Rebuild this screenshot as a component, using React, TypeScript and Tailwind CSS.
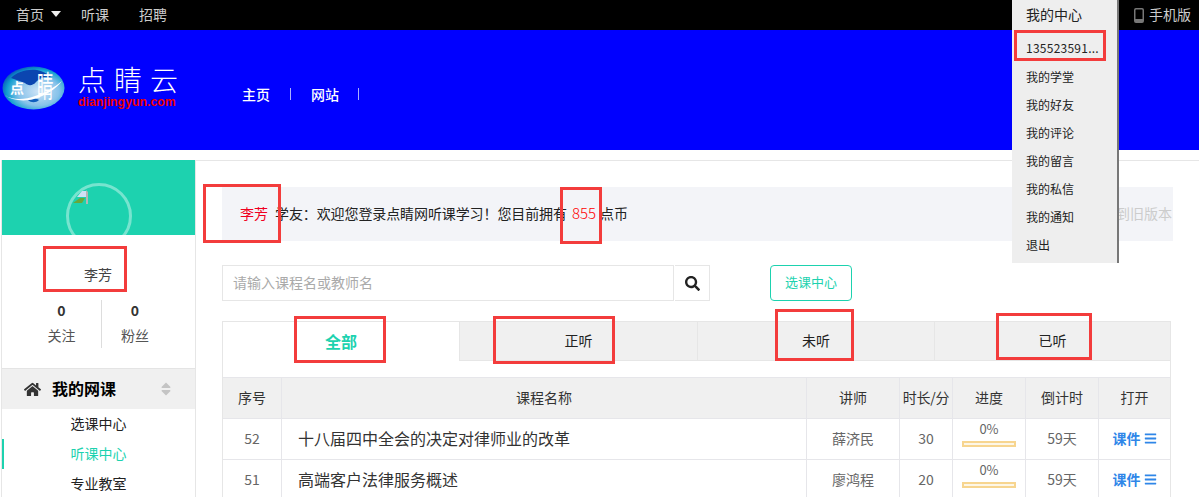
import { FaBars, FaHome, FaSearch, FaSort } from "react-icons/fa";

const FONT = "font-['Noto_Sans_CJK_SC','Liberation_Sans',sans-serif]";

const DROPDOWN = ["我的学堂", "我的好友", "我的评论", "我的留言", "我的私信", "我的通知", "退出"];

const COLUMNS = "grid grid-cols-[58px_525px_93px_53px_73px_73px_1fr]";

const COURSES = [
  { id: 52, title: "十八届四中全会的决定对律师业的改革", teacher: "薛济民", minutes: 30 },
  { id: 51, title: "高端客户法律服务概述", teacher: "廖鸿程", minutes: 20 },
];

// Red annotation boxes sit on top of the screenshot, so they are placed by coordinates.
const MARKS = [
  "left-[203px] top-[184px] w-[78px] h-[59px]",
  "left-[560px] top-[187px] w-[42px] h-[57px]",
  "left-[43px] top-[246px] w-[84px] h-[46px]",
  "left-[294px] top-[316px] w-[92px] h-[47px]",
  "left-[493px] top-[316px] w-[122px] h-[48px]",
  "left-[775px] top-[309px] w-[79px] h-[52px]",
  "left-[996px] top-[313px] w-[96px] h-[47px]",
  "left-[1014px] top-[30px] w-[92px] h-[31px]",
];

function Logo() {
  return (
    <div className="mb-[4px] flex items-center gap-[13px]">
      <svg width="63" height="44" viewBox="0 0 63 44" className="shrink-0 overflow-visible">
        <defs>
          <radialGradient id="globe" cx="58%" cy="58%" r="60%">
            <stop offset="0%" stopColor="#cfe4f7" />
            <stop offset="55%" stopColor="#86c2ea" />
            <stop offset="85%" stopColor="#119fd0" />
            <stop offset="100%" stopColor="#0a62bb" />
          </radialGradient>
        </defs>
        <ellipse cx="31.5" cy="22" rx="31" ry="21.5" fill="url(#globe)" />
        <path d="M9 12c6-6 15-9 26-8 5 1 10 3 14 7-7-1-11 1-15 5-3 4-8 4-11 1-5-2-9-3-14-5z" fill="#0b45b0" />
        <path d="M26 34c4-2 8-2 11 0-3 3-8 3-11 0z" fill="#0f5fbe" />
        <path d="M3 29c6 5 20 5 30 1 10-3 20-9 27-15-6 8-17 15-28 18-11 3-23 1-29-4z" fill="#fff" />
        <text x="8" y="27" fontSize="14" fontWeight="700" fill="#fff">点</text>
        <text transform="translate(35 31) scale(0.75 1.35)" fontSize="22" fontWeight="400" fill="#fff">睛</text>
      </svg>
      <div className="flex flex-col items-start">
        <span className="mb-[5px] text-[28px] leading-[24px] tracking-[8px] font-light text-white">点睛云</span>
        <span className="text-[12.3px] leading-[13px] font-bold text-[#f00000] font-['Liberation_Sans',sans-serif]">dianjingyun.com</span>
      </div>
    </div>
  );
}

function TopBar() {
  return (
    <div className="h-[30px] bg-black flex items-center justify-between pl-4 pr-2 pb-[2px] text-sm text-[#ccc]">
      <div className="flex items-center">
        <span>首页</span>
        <svg width="10" height="6" viewBox="0 0 10 6" className="ml-[7px] mr-5">
          <path d="M0 0h10L5 6z" fill="#eee" />
        </svg>
        <span className="mr-[30px]">听课</span>
        <span>招聘</span>
      </div>
      <div className="flex items-center gap-[5px]">
        <svg width="10" height="15" viewBox="0 0 10 15" className="mt-[2px]">
          <rect x="0.75" y="0.75" width="8.5" height="13.5" rx="1.2" fill="none" stroke="#777" strokeWidth="1.5" />
          <rect x="1" y="11" width="8" height="3" fill="#777" />
        </svg>
        <span>手机版</span>
      </div>
    </div>
  );
}

function Banner() {
  return (
    <div className="h-[120px] bg-[#0000ff] pl-[2px] flex items-center">
      <Logo />
      <div className="ml-[56px] mt-[8px] flex items-center text-sm font-medium text-white">
        <span>主页</span>
        <span className="mx-5 h-3 w-px bg-[#aab0ff]" />
        <span>网站</span>
        <span className="mx-[19px] h-3 w-px bg-[#aab0ff]" />
      </div>
    </div>
  );
}

function Sidebar() {
  return (
    <aside className="ml-px w-[195px] shrink-0 border-x border-[#e6e6e6]">
      <div className="relative h-[75px] bg-[#1dd2af]">
        <div className="absolute left-[64px] top-[23px] w-[66px] h-[66px] rounded-full border-[3px] border-white/40" />
        <svg width="16" height="16" viewBox="0 0 16 16" className="absolute left-[70px] top-[30px]">
          <path d="M14 0l2 2v12h-2z" fill="#b5b5b5" />
          <path d="M5 7l5-6h4v6z" fill="#cfe0f5" />
          <path d="M1 13l7-5h5l-3 5z" fill="#69a83a" />
        </svg>
      </div>
      <div className="pt-[29px] pr-px text-center text-sm leading-[20px] text-[#444]">李芳</div>
      <div className="mt-[16px] flex h-[48px] text-center">
        <div className="w-[100px] pl-[20px] border-r border-[#ddd]">
          <div className="text-sm leading-[20px] font-bold text-[#333]">0</div>
          <div className="mt-[5px] text-sm leading-[20px] text-[#555]">关注</div>
        </div>
        <div className="w-[66px]">
          <div className="text-sm leading-[20px] font-bold text-[#333]">0</div>
          <div className="mt-[5px] text-sm leading-[20px] text-[#555]">粉丝</div>
        </div>
      </div>
      <div className="mt-5 h-[41px] bg-[#f0f0f0] border-t border-[#e4e4e4] flex items-center pl-[22px] pr-[21px]">
        <FaHome size={17} className="text-[#333]" />
        <span className="ml-[11px] pb-[2px] text-base font-bold text-black">我的网课</span>
        <FaSort size={16} className="ml-auto text-[#c4c4c4]" />
      </div>
      <div className="text-sm text-center text-[#222]">
        <div className="h-[30px] leading-[28px]">选课中心</div>
        <div className="relative h-[30px] leading-[28px] text-[#1dd2af]">
          <span className="absolute left-0 top-0 h-[30px] w-[2px] bg-[#1dd2af]" />
          听课中心
        </div>
        <div className="h-[30px] leading-[28px]">专业教室</div>
      </div>
    </aside>
  );
}

function Tabs() {
  const tab = "flex items-center justify-center pb-[2px]";
  return (
    <div className="mr-[2px] mt-5 h-[40px] flex text-sm text-[#222] border border-[#e6e6e6] border-b-0">
      <div className={`${tab} w-[236px] text-base font-bold text-[#1dd2af]`}>全部</div>
      <div className={`${tab} w-[238px] bg-[#f0f0f0] border-l border-b border-[#e6e6e6]`}>正听</div>
      <div className={`${tab} w-[237px] bg-[#f0f0f0] border-l border-b border-[#e6e6e6]`}>未听</div>
      <div className={`${tab} flex-1 bg-[#f0f0f0] border-l border-b border-[#e6e6e6]`}>已听</div>
    </div>
  );
}

function CourseTable() {
  const cell = "flex items-center justify-center pb-[2px] border-l border-[#e6e6ea]";
  return (
    <div className="mr-[2px] pt-[16px] border-x border-[#e6e6e6]">
      <div className={`${COLUMNS} h-[41px] bg-[#f0f0f0] text-sm text-[#333] border-t border-[#e6e6ea]`}>
        <div className="flex items-center justify-center pb-[2px]">序号</div>
        <div className={cell}>课程名称</div>
        <div className={cell}>讲师</div>
        <div className={`${cell} whitespace-nowrap tracking-[-0.3px]`}>时长/分</div>
        <div className={cell}>进度</div>
        <div className={cell}>倒计时</div>
        <div className={cell}>打开</div>
      </div>
      {COURSES.map((course) => (
        <div key={course.id} className={`${COLUMNS} h-[41px] text-sm text-[#666] border-t border-[#e6e6ea]`}>
          <div className="flex items-center justify-center pb-[2px]">{course.id}</div>
          <div className="flex items-center pl-4 pb-[2px] text-base text-[#333] border-l border-[#e6e6ea]">{course.title}</div>
          <div className={cell}>{course.teacher}</div>
          <div className={cell}>{course.minutes}</div>
          <div className="flex flex-col items-center pt-px border-l border-[#e6e6ea]">
            <span className="text-[13px] leading-[18px]">0%</span>
            <span className="mt-[3px] h-[6px] w-[54px] border-2 border-[#f7d58f] bg-[#fdf6e6]" />
          </div>
          <div className={cell}>59天</div>
          <div className={`${cell} gap-[3px] font-bold text-[#2f86e8]`}>
            课件
            <FaBars size={13} />
          </div>
        </div>
      ))}
    </div>
  );
}

function Main() {
  return (
    <main className="flex-1 border-t border-[#e6e6e6] pt-[26px] px-[26px]">
      <div className="h-[54px] bg-[#f3f4f8] flex items-center pl-[18px] pr-px pb-[2px] text-sm text-[#222]">
        <span className="text-[#f00020]">李芳</span>
        <span className="ml-[7px] tracking-[-0.1px]">学友：欢迎您登录点睛网听课学习！您目前拥有</span>
        <span className="ml-[5px] text-[15px] font-light text-[#ff0000]">855</span>
        <span className="ml-[4px]">点币</span>
        <span className="ml-auto text-[#ccc]">切换到旧版本</span>
      </div>
      <div className="mt-6 flex items-stretch h-9">
        <div className="w-[452px] border border-[#e6e6e6] flex items-center pl-[10px] pb-[2px] text-sm text-[#aaa]">请输入课程名或教师名</div>
        <div className="ml-px w-[35px] border border-l-0 border-[#e6e6e6] flex items-center justify-center">
          <FaSearch size={15} className="text-[#222]" />
        </div>
        <div className="ml-[60px] w-[82px] rounded-[4px] border border-[#1dd2af] flex items-center justify-center pb-[2px] text-[13px] text-[#1dd2af]">选课中心</div>
      </div>
      <Tabs />
      <CourseTable />
    </main>
  );
}

export default function App() {
  return (
    <div className={`relative h-[497px] w-[1199px] overflow-hidden bg-white ${FONT}`}>
      <TopBar />
      <Banner />
      <div className="mt-[10px] flex">
        <Sidebar />
        <Main />
      </div>

      {/* account dropdown, open over the header */}
      <div className="absolute left-[1012px] top-0 w-[107px] h-[263px] bg-[#eee] border-r-2 border-[#777] pl-[14px] text-xs text-[#222]">
        <div className="h-[30px] leading-[28px] text-sm">我的中心</div>
        <div className="h-[33px] leading-[36px] tracking-[0.25px]">135523591...</div>
        {DROPDOWN.map((item) => (
          <div key={item} className="h-7 leading-7">{item}</div>
        ))}
      </div>

      {MARKS.map((mark) => (
        <div key={mark} className={`absolute border-[3px] border-[#f33c3c] ${mark}`} />
      ))}
    </div>
  );
}
